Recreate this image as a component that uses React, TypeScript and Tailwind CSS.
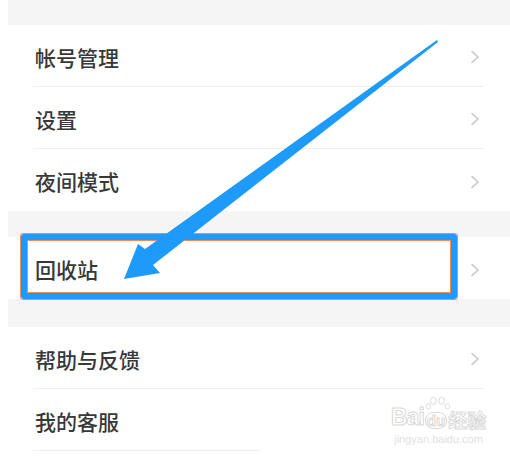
import React from "react";

const rows1 = ["帐号管理", "设置", "夜间模式"];

function Chevron() {
  return (
    <svg width="10" height="14" viewBox="0 0 10 14" fill="none">
      <polyline points="2,1.5 8,7 2,12.5" stroke="#c6c6c6" strokeWidth="1.6" strokeLinecap="round" strokeLinejoin="round" />
    </svg>
  );
}

function Row({ label, h = "h-[61px]" }: { label: string; h?: string }) {
  return (
    <div className={`ml-2 ${h} flex items-center pl-[27px] pr-[30px] pt-[3px]`}>
      <span className="flex-1 text-[21px] font-medium text-[#383838] leading-none">{label}</span>
      <Chevron />
    </div>
  );
}

function Divider({ short }: { short?: boolean }) {
  return <div className={short ? "ml-[33px] w-[227px] h-px bg-[#efefef]" : "ml-[33px] mr-[26px] h-px bg-[#efefef]"} />;
}

export default function App() {
  return (
    <div className="relative w-[510px] h-[462px] bg-white overflow-hidden font-['Noto_Sans_CJK_SC','Noto_Sans',sans-serif]">
      {/* top gray band */}
      <div className="ml-2 h-[25px] bg-[#f5f5f5]" />

      <Row label={rows1[0]} />
      <Divider />
      <Row label={rows1[1]} />
      <Divider />
      <Row label={rows1[2]} h="h-[62px]" />

      <div className="ml-2 h-[26px] bg-[#f5f5f5]" />
      <Row label="回收站" h="h-[62px]" />
      <div className="ml-2 h-[28px] bg-[#f5f5f5]" />

      <Row label="帮助与反馈" />
      <Divider />
      <Row label="我的客服" />
      <Divider short />

      {/* highlight box */}
      <div className="absolute left-[20px] top-[233px] w-[438px] h-[67px] border border-[#ef8b5c] rounded-[3px]">
        <div className="h-full border-[6px] border-[#1e9bfa] rounded-[3px]">
          <div className="h-full border border-[#ef8b5c]" />
        </div>
      </div>

      {/* arrow */}
      <svg className="absolute left-0 top-0" width="510" height="462" viewBox="0 0 510 462">
        <polygon
          points="437,40 145,249 138,244 124,279 160,273 153,265 438,42"
          fill="#1e9bfa"
        />
      </svg>

      {/* watermark */}
      <div className="absolute left-[391px] top-[406px] flex flex-col items-center text-white font-['Liberation_Sans',sans-serif]">
        <div className="flex items-end leading-none">
          <span className="text-[23px] font-bold tracking-[-1px] [-webkit-text-stroke:1px_#dadada]">Bai</span>
          <span className="relative mx-[1px]">
            <svg width="26" height="28" viewBox="0 0 28 30" className="absolute -top-[16px] left-0">
              <g fill="white" stroke="#dadada" strokeWidth="1">
                <ellipse cx="9" cy="5" rx="3" ry="4" />
                <ellipse cx="18" cy="5" rx="3" ry="4" />
                <ellipse cx="3.5" cy="11" rx="2.5" ry="3" />
                <ellipse cx="24" cy="11" rx="2.5" ry="3" />
              </g>
            </svg>
            <span className="inline-block rounded-[8px] border border-[#dadada] px-[1px] text-[15px] font-bold text-white [-webkit-text-stroke:1px_#dadada]">du</span>
          </span>
          <span className="text-[19px] font-bold text-white [-webkit-text-stroke:1px_#dadada] font-['Noto_Sans_CJK_SC',sans-serif]">经验</span>
        </div>
        <span className="mt-[5px] text-[11px] text-[#e2e2e2] leading-none">jingyan.baidu.com</span>
      </div>
    </div>
  );
}
